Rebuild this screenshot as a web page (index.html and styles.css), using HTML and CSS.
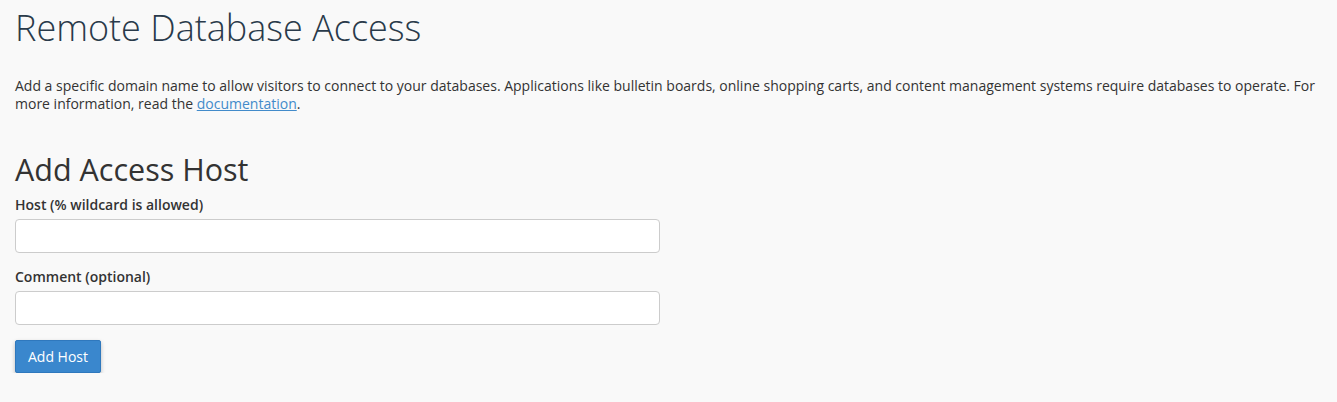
FILE: index.html
```html
<!DOCTYPE html>
<html>

<head>
    <title>Remote Database Access</title>
    <link rel="stylesheet" href="styles.css">
</head>

<body>
    <div class="page-body">
        <h1 class="page-header">Remote Database Access</h1>

        <p class="description">
            Add a specific domain name to allow visitors to connect to your databases. Applications like bulletin boards, online shopping carts, and content management systems require databases to operate. For more information, read the <a href="#">documentation</a>.
        </p>

        <h2 class="section-title">Add Access Host</h2>

        <form class="host-form" onsubmit="return false;">
            <div class="form-group">
                <label for="host">Host (% wildcard is allowed)</label>
                <input type="text" id="host" class="form-control">
            </div>
            <div class="form-group">
                <label for="comment">Comment (optional)</label>
                <input type="text" id="comment" class="form-control">
            </div>
            <button type="submit" class="btn btn-primary">Add Host</button>
        </form>
    </div>
</body>

</html>
```

FILE: styles.css
```css
/* Base page styles */
body {
    margin: 0;
    background: #f9f9f9;
    color: #333;
    font-family: "Open Sans", "Liberation Sans", sans-serif;
    font-size: 14px;
}

.page-body {
    padding: 0 15px;
}

/* Page header */
.page-header {
    margin: 8px 0 0;
    font-size: 36px;
    font-weight: 300;
    line-height: 40px;
    color: #293a4a;
}

.description {
    margin: 29px 0 0;
    line-height: 18px;
    font-size: 14px;
}

.description a {
    color: #428bca;
}

/* Add host section */
.section-title {
    margin: 38px 0 0;
    font-size: 30.5px;
    font-weight: 400;
    line-height: 36px;
    color: #333;
}

.form-group {
    margin-bottom: 14px;
}

.form-group label {
    display: block;
    margin: 8px 0 4px;
    font-size: 14px;
    font-weight: 600;
    line-height: 20px;
}

.form-control {
    display: block;
    width: 645px;
    height: 34px;
    padding: 6px 12px;
    border: 1px solid #ccc;
    border-radius: 4px;
    background: #fff;
    box-sizing: border-box;
    font-family: inherit;
    font-size: 14px;
}

/* Button */
.btn {
    height: 33px;
    margin-top: 1px;
    padding: 0 12px;
    border: 1px solid #2f78bd;
    border-radius: 2px;
    font-family: inherit;
    font-size: 14px;
    cursor: pointer;
}

.btn-primary {
    background: #3a87cd;
    color: #fff;
    box-shadow: 0 2px 4px rgba(0, 0, 0, 0.25);
}
```
